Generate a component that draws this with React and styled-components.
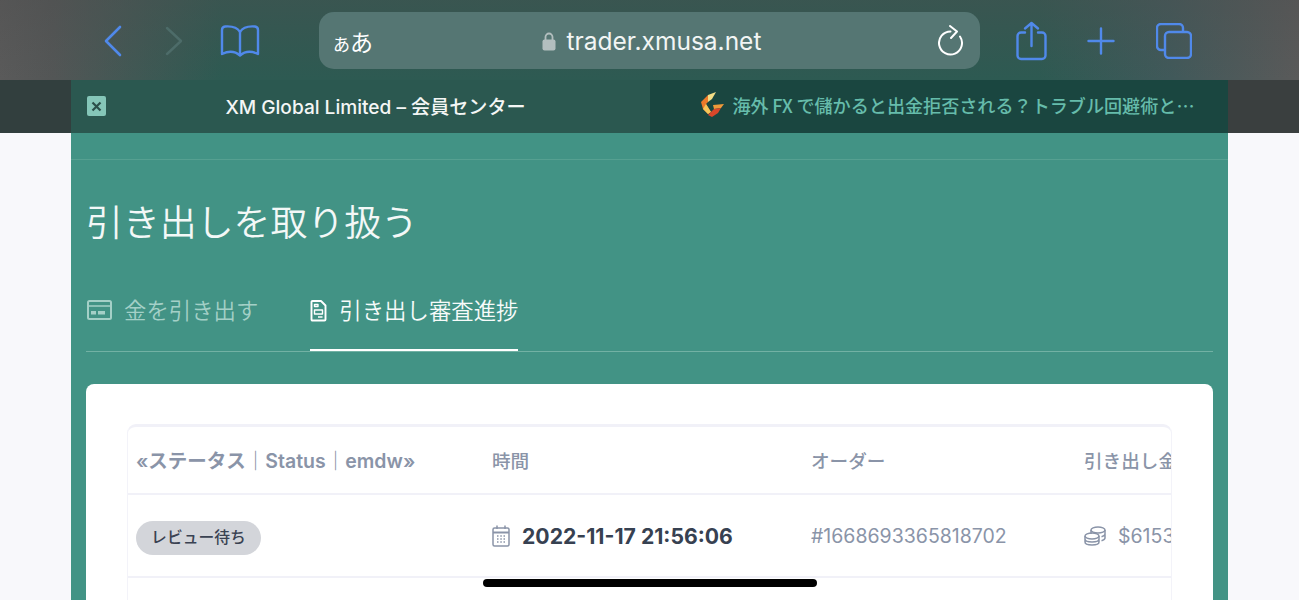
import React from 'react';
import styled, { createGlobalStyle } from 'styled-components';

const GlobalStyle = createGlobalStyle`
  html, body {
    margin: 0;
    padding: 0;
    height: 100%;
    overflow: hidden;
    background: #f7f8fb;
  }
`;

const blue = '#5089ea';
const jpSans = `Inter, "Noto Sans CJK JP", sans-serif`;
const jpOnly = `"Noto Sans CJK JP", sans-serif`;

const Screen = styled.div`
  position: relative;
  width: 1299px;
  height: 600px;
  overflow: hidden;
  background: #f8f8fb;
  font-family: ${jpSans};
`;

const Toolbar = styled.div`
  height: 80px;
  box-sizing: border-box;
  padding: 12px 0 11px;
  display: flex;
  background:
    linear-gradient(180deg, rgba(78, 78, 78, 0.38) 0, rgba(78, 78, 78, 0) 100%),
    linear-gradient(90deg, #5a5a5a 0, #535656 4%, #2d5a52 17%, #2d5a52 80%, #40595a 90%, #5a5a5a 100%);
`;

const NavGroup = styled.div`
  width: 319px;
  flex: none;
  display: flex;
  align-items: center;
  padding-left: 103px;
  box-sizing: border-box;
  gap: 39px;
`;

const ActionGroup = styled.div`
  flex: 1;
  display: flex;
  align-items: center;
  padding-left: 36px;
  gap: 40px;
`;

const AddressBar = styled.div`
  width: 661px;
  flex: none;
  height: 57px;
  border-radius: 15px;
  background: #557673;
  display: flex;
  align-items: center;
  justify-content: space-between;
  box-sizing: border-box;
  padding: 0 16px 0 14px;
  color: #fff;
`;

const TextSize = styled.span`
  font-size: 23px;
  font-family: ${jpOnly};
  width: 60px;
  span {
    font-size: 17px;
  }
`;

const Domain = styled.span`
  display: flex;
  align-items: center;
  gap: 11px;
  font-size: 24.5px;
  color: #f2f5f4;
  margin-right: 28px;
`;

const TabBar = styled.div`
  height: 53px;
  display: grid;
  grid-template-columns: 71px 579px 578px 71px;
`;

const TabEdge = styled.div`
  background: ${(p) => p.$bg};
`;

const Tab = styled.div`
  position: relative;
  display: flex;
  align-items: center;
  justify-content: center;
  box-sizing: border-box;
  gap: 7px;
  background: ${(p) => (p.$active ? '#2b5850' : '#1a4640')};
  color: ${(p) => (p.$active ? '#f4f6f5' : '#66bcab')};
  font-size: ${(p) => (p.$active ? '19.1px' : '18.1px')};
  font-family: ${(p) => (p.$active ? jpSans : jpOnly)};
  font-weight: 500;
  padding: 0 0 ${(p) => (p.$active ? '2px' : '4px')} ${(p) => (p.$active ? '30px' : '18px')};
  white-space: nowrap;
`;

const TabClose = styled.span`
  position: absolute;
  left: 16px;
  top: 16px;
  width: 19px;
  height: 20px;
  border-radius: 2px;
  background: #85c6b8;
  color: #2b4f4a;
  display: flex;
  align-items: center;
  justify-content: center;
`;

const Main = styled.main`
  margin: 0 71px;
  height: 467px;
  box-sizing: border-box;
  background: #429385;
  padding: 0 15px;
  position: relative;
`;

const TopRule = styled.div`
  height: 26px;
  margin: 0 -15px;
  border-bottom: 1px solid #56a091;
`;

const Title = styled.h1`
  margin: 0;
  padding-top: 35px;
  font-size: 36.9px;
  line-height: 50px;
  font-weight: 350;
  font-family: ${jpOnly};
  color: #f3f8f7;
`;

const TabNav = styled.nav`
  margin-top: 43px;
  height: 63px;
  display: flex;
  gap: 52px;
  border-bottom: 1px solid #72b1a4;
`;

const NavItem = styled.div`
  display: flex;
  align-items: flex-start;
  gap: 12px;
  height: 63px;
  box-sizing: border-box;
  padding-top: 6px;
  font-size: 22.4px;
  line-height: 30px;
  font-family: ${jpOnly};
  font-weight: 350;
  color: ${(p) => (p.$active ? '#f7fbfa' : '#a4d0c7')};
  border-bottom: ${(p) => (p.$active ? '2px solid #fff' : '2px solid transparent')};
  svg {
    margin-top: 6px;
    flex: none;
  }
`;

const Card = styled.section`
  margin-top: 32px;
  height: 240px;
  background: #fff;
  border-radius: 8px;
  padding: 40px 41px 0 41px;
  box-sizing: border-box;
`;

const Table = styled.div`
  height: 200px;
  border: 1px solid #f3f3f9;
  border-top: 3px solid #f1f1f8;
  border-bottom: none;
  border-radius: 9px 9px 0 0;
  overflow: hidden;
`;

const Row = styled.div`
  display: grid;
  grid-template-columns: 356px 319px 273px 200px;
  padding-left: 8px;
  align-items: center;
  height: ${(p) => (p.$head ? '66px' : '81px')};
  border-bottom: 2px solid #f1f1f8;
  width: 1200px;
`;

const HeadCell = styled.div`
  color: #8a94a8;
  font-size: ${(p) => (p.$status ? '19.5px' : '18.6px')};
  font-weight: ${(p) => (p.$status ? 600 : 500)};
  white-space: nowrap;
  padding-bottom: 2px;
`;

const BadgeCell = styled.div`
  display: flex;
  padding-top: 5px;
`;

const Badge = styled.span`
  display: block;
  background: #d3d5da;
  color: #3a4252;
  border-radius: 17px;
  height: 34px;
  line-height: 34px;
  width: 125px;
  text-align: center;
  font-size: 15.8px;
  font-weight: 500;
`;

const DateCell = styled.div`
  display: flex;
  align-items: center;
  gap: 12px;
  font-size: 21.2px;
  font-weight: 700;
  color: #374151;
  white-space: nowrap;
`;

const OrderCell = styled.div`
  color: #8a94a8;
  font-size: 19.5px;
`;

const AmountCell = styled.div`
  display: flex;
  align-items: center;
  gap: 12px;
  color: #8a94a8;
  font-size: 19.5px;
`;

const HomeBar = styled.div`
  position: absolute;
  left: 483px;
  top: 579px;
  width: 334px;
  height: 8px;
  border-radius: 4px;
  background: #000;
`;

const Back = () => (
  <svg width="22" height="32" viewBox="0 0 22 32" fill="none" stroke={blue} strokeWidth="2.6" strokeLinecap="round" strokeLinejoin="round">
    <path d="M17 2 L3 16 L17 30" />
  </svg>
);

const Forward = () => (
  <svg width="20" height="30" viewBox="0 0 20 30" fill="none" stroke="#4d6c69" strokeWidth="2.4" strokeLinecap="round" strokeLinejoin="round">
    <path d="M3 2 L17 15 L3 28" />
  </svg>
);

const Book = () => (
  <svg width="40" height="32" viewBox="0 0 40 32" fill="none" stroke={blue} strokeWidth="2.4" strokeLinejoin="round" style={{ marginLeft: -3 }}>
    <path d="M20 7 C17 2 11 1 5 1.5 C3 1.7 2 3 2 5 L2 29 C8 26 15 26 20 30.5 C25 26 32 26 38 29 L38 5 C38 3 37 1.7 35 1.5 C29 1 23 2 20 7 Z" />
    <path d="M20 7 L20 30" />
  </svg>
);

const Lock = () => (
  <svg width="14" height="20" viewBox="0 0 14 20">
    <path d="M3.5 9 V6 a3.5 3.5 0 0 1 7 0 V9" fill="none" stroke="#b3bfbf" strokeWidth="1.8" />
    <rect x="0.5" y="8.5" width="13" height="11" rx="2" fill="#b3bfbf" />
  </svg>
);

const Reload = () => (
  <svg width="26" height="32" viewBox="0 0 26 32" fill="none" stroke="#fff" strokeWidth="2" strokeLinecap="round" strokeLinejoin="round">
    <path d="M12.500 6.500 A11.500 11.500 0 1 0 22 11.500" />
    <path d="M12 1 L19 6.500 L13 13" />
  </svg>
);

const Share = () => (
  <svg width="31" height="40" viewBox="0 0 31 40" fill="none" stroke={blue} strokeWidth="2.4" strokeLinecap="round" strokeLinejoin="round">
    <path d="M9 11.500 H5 a3.500 3.500 0 0 0 -3.500 3.500 V34.500 a3.500 3.500 0 0 0 3.500 3.500 H26 a3.500 3.500 0 0 0 3.500 -3.500 V15 a3.500 3.500 0 0 0 -3.500 -3.500 H22" />
    <path d="M15.500 25 V2 M9 7.500 L15.500 2 L22 7.500" />
  </svg>
);

const Plus = () => (
  <svg width="28" height="28" viewBox="0 0 28 28" fill="none" stroke={blue} strokeWidth="2.4" strokeLinecap="round">
    <path d="M14 1.500 V26.500 M1.500 14 H26.500" />
  </svg>
);

const Tabs = () => (
  <svg width="36" height="36" viewBox="0 0 36 36" fill="none" stroke={blue} strokeWidth="2.4" strokeLinejoin="round" style={{ marginLeft: 1 }}>
    <path d="M9 27 H5 a4 4 0 0 1 -4 -4 V5 a4 4 0 0 1 4 -4 H23 a4 4 0 0 1 4 4 V9" />
    <rect x="9" y="9" width="26" height="26" rx="4" />
  </svg>
);

const GLogo = () => (
  <svg width="24" height="25" viewBox="0 0 24 25">
    <polygon points="7,3 15,0 11,7 7,10" fill="#f3dd86" />
    <polygon points="0,10 7,3 7,10 5,12 10,20 7,22 2,17" fill="#ec7a2a" />
    <polygon points="2,17 5,12 10,20 7,22" fill="#f6c658" />
    <polygon points="12,13 23,12 20,16 13,17" fill="#ef9a3a" />
    <polygon points="13,17 20,16 17,21 11,25 7,23" fill="#d9472a" />
  </svg>
);

const CardIcon = () => (
  <svg width="26" height="20" viewBox="0 0 26 20" fill="none" stroke="#a4d0c7">
    <rect x="2" y="1" width="23" height="18" rx="1.500" strokeWidth="2" />
    <path d="M2 6 H25" strokeWidth="1.500" />
    <rect x="5" y="11" width="5" height="3.500" fill="#a4d0c7" stroke="none" />
    <rect x="12" y="11" width="7" height="3.500" fill="#a4d0c7" stroke="none" />
  </svg>
);

const DocIcon = () => (
  <svg width="17" height="22" viewBox="0 0 17 22" fill="none" stroke="#fff" strokeWidth="1.900" strokeLinejoin="round">
    <path d="M1.500 2 a1 1 0 0 1 1 -1 H11 L15.500 5.500 V19.500 a1 1 0 0 1 -1 1 H2.500 a1 1 0 0 1 -1 -1 Z" />
    <path d="M4.500 4.500 H8 V6.500 H4.500 Z M4.500 10 H12.500 V14 H4.500 Z M8 17 H12.500" strokeWidth="1.400" />
  </svg>
);

const Calendar = () => (
  <svg width="18" height="22" viewBox="0 0 18 22" fill="none" stroke="#8a94a8" strokeWidth="1.500">
    <rect x="1" y="3" width="16" height="18" rx="1.500" />
    <path d="M1 7.500 H17" strokeWidth="2" />
    <path d="M5 0.500 V4 M13 0.500 V4" />
    <path d="M5 11 H6.500 M8.300 11 H9.800 M11.500 11 H13 M5 14 H6.500 M8.300 14 H9.800 M11.500 14 H13 M5 17 H6.500 M8.300 17 H9.800 M11.500 17 H13" strokeWidth="1.500" />
  </svg>
);

const Coins = () => (
  <svg width="22" height="20" viewBox="0 0 22 20" fill="none" stroke="#8a94a8" strokeWidth="1.500">
    <ellipse cx="14" cy="4" rx="7" ry="3" />
    <path d="M7 4 V8 M21 4 V12 c0 1.200 -1.500 2.200 -3.500 2.700 M21 8 c0 1.200 -1.500 2.200 -3.500 2.700" />
    <ellipse cx="8" cy="10" rx="7" ry="3" />
    <path d="M1 10 V16 c0 1.700 3 3 7 3 s7 -1.300 7 -3 V10 M1 13 c0 1.700 3 3 7 3 s7 -1.300 7 -3" />
  </svg>
);

const App = () => (
  <Screen>
    <GlobalStyle />
    <Toolbar>
      <NavGroup>
        <Back />
        <Forward />
        <Book />
      </NavGroup>
      <AddressBar>
        <TextSize><span>あ</span>あ</TextSize>
        <Domain>
          <Lock />
          trader.xmusa.net
        </Domain>
        <Reload />
      </AddressBar>
      <ActionGroup>
        <Share />
        <Plus />
        <Tabs />
      </ActionGroup>
    </Toolbar>
    <TabBar>
      <TabEdge $bg="#323f3e" />
      <Tab $active>
        <TabClose>
          <svg width="11" height="11" viewBox="0 0 11 11" stroke="currentColor" strokeWidth="2.200">
            <path d="M1.500 1.500 L9.500 9.500 M9.500 1.500 L1.500 9.500" />
          </svg>
        </TabClose>
        XM Global Limited – 会員センター
      </Tab>
      <Tab>
        <GLogo />
        海外&#8201;FX&#8201;で儲かると出金拒否される？トラブル回避術と…
      </Tab>
      <TabEdge $bg="#3a3f3f" />
    </TabBar>
    <Main>
      <TopRule />
      <Title>引き出しを取り扱う</Title>
      <TabNav>
        <NavItem>
          <CardIcon />
          金を引き出す
        </NavItem>
        <NavItem $active>
          <DocIcon />
          引き出し審査進捗
        </NavItem>
      </TabNav>
      <Card>
        <Table>
          <Row $head>
            <HeadCell $status>«ステータス｜Status｜emdw»</HeadCell>
            <HeadCell>時間</HeadCell>
            <HeadCell>オーダー</HeadCell>
            <HeadCell>引き出し金額</HeadCell>
          </Row>
          <Row>
            <BadgeCell><Badge>レビュー待ち</Badge></BadgeCell>
            <DateCell>
              <Calendar />
              2022-11-17 21:56:06
            </DateCell>
            <OrderCell>#1668693365818702</OrderCell>
            <AmountCell>
              <Coins />
              $6153
            </AmountCell>
          </Row>
        </Table>
      </Card>
    </Main>
    <HomeBar />
  </Screen>
);

export default App;
